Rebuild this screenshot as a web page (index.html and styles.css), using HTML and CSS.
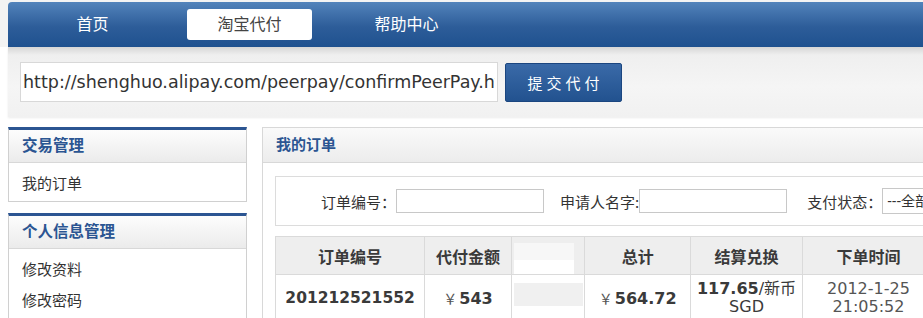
FILE: index.html
```html
<!DOCTYPE html>
<html lang="zh-CN">

<head>
  <meta charset="UTF-8">
  <meta name="viewport" content="width=device-width, initial-scale=1.0">
  <title>淘宝代付</title>
  <link rel="stylesheet" href="styles.css">
</head>

<body>
  <div class="topbar">
    <ul class="nav">
      <li>首页</li>
      <li class="active">淘宝代付</li>
      <li>帮助中心</li>
    </ul>
  </div>

  <div class="urlbar">
    <input class="url" type="text" value="http://shenghuo.alipay.com/peerpay/confirmPeerPay.htm">
    <button class="submit">提交代付</button>
  </div>

  <div class="layout">
    <aside class="sidebar">
      <div class="side-box">
        <h3>交易管理</h3>
        <ul>
          <li>我的订单</li>
        </ul>
      </div>
      <div class="side-box">
        <h3>个人信息管理</h3>
        <ul>
          <li>修改资料</li>
          <li>修改密码</li>
        </ul>
      </div>
    </aside>

    <main class="panel">
      <div class="panel-head">我的订单</div>
      <div class="panel-body">
        <div class="search">
          <label>订单编号：</label>
          <input class="field" type="text">
          <label class="gap-16">申请人名字:</label>
          <input class="field" type="text">
          <label class="gap-20">支付状态：</label>
          <select class="status">
            <option>---全部---</option>
          </select>
        </div>

        <table class="orders">
          <tr class="head">
            <th class="c1">订单编号</th>
            <th class="c2">代付金额</th>
            <th class="c3"><div class="mask-white"></div></th>
            <th class="c4">总计</th>
            <th class="c5">结算兑换</th>
            <th class="c6">下单时间</th>
          </tr>
          <tr class="row">
            <td class="num">201212521552</td>
            <td><span class="yen">￥</span><b>543</b></td>
            <td class="c3"><div class="mask-grey"></div></td>
            <td><span class="yen">￥</span><b>564.72</b></td>
            <td class="rate"><b>117.65</b>/新币<br>SGD</td>
            <td class="time">2012-1-25<br>21:05:52</td>
          </tr>
        </table>
      </div>
    </main>
  </div>
</body>

</html>
```

FILE: styles.css
```css
html {
  overflow: hidden;
}

body {
  margin: 0;
  padding: 2px 0 0 8px;
  width: 1200px;
  font-family: "DejaVu Sans", "Noto Sans CJK SC", sans-serif;
  background: linear-gradient(#f3f3f3 0, #f3f3f3 47px, #fff 47px);
}

.topbar {
  height: 45px;
  background: linear-gradient(#5283bb, #2d5d99 55%, #1f518f);
  border-radius: 4px 0 0 0;
}

.nav {
  display: flex;
  gap: 32px;
  margin: 0;
  padding: 7px 0 0 22px;
  list-style: none;
}

.nav li {
  width: 125px;
  height: 31px;
  line-height: 31px;
  text-align: center;
  color: #fff;
  font-size: 16px;
  border-radius: 3px;
}

.nav .active {
  background: #fff;
  color: #444;
}

.urlbar {
  display: flex;
  gap: 7px;
  height: 55px;
  padding: 15px 0 0 12px;
  background: linear-gradient(#d6d6d6, #efefef 8px, #f5f5f5 40px, #f1f1f1);
  box-shadow: 0 1px 2px rgba(0, 0, 0, 0.08);
}

.url {
  width: 478px;
  height: 40px;
  box-sizing: border-box;
  border: 1px solid #d8d8d8;
  padding: 0 2px;
  font-family: "DejaVu Sans", sans-serif;
  font-size: 17.5px;
  color: #333;
  background: #fff;
  outline: none;
}

.submit {
  width: 117px;
  height: 39px;
  margin-top: 1px;
  background: linear-gradient(#3a6aa8, #22528f);
  border: 1px solid #1b4680;
  border-radius: 2px;
  color: #fff;
  font-family: "Noto Sans CJK SC", sans-serif;
  font-size: 15px;
  letter-spacing: 4px;
  padding: 0 0 0 4px;
}

.layout {
  display: flex;
  align-items: flex-start;
  gap: 15px;
  margin-top: 10px;
}

.sidebar {
  width: 239px;
  flex: 0 0 239px;
}

.side-box {
  box-sizing: border-box;
  border: 1px solid #d0d0d0;
  border-top: 3px solid #2b5592;
  margin-bottom: 11px;
  background: #fff;
}

.side-box h3 {
  margin: 0;
  height: 32px;
  line-height: 32px;
  padding-left: 13px;
  font-size: 15.5px;
  color: #2b5592;
  background: linear-gradient(#fdfdfd, #ebebeb);
  border-bottom: 1px solid #d8d8d8;
}

.side-box ul {
  margin: 0;
  padding: 6px 0 1px 13px;
  list-style: none;
}

.side-box li {
  line-height: 31px;
  font-size: 15px;
  color: #333;
}

.panel {
  flex: 0 0 760px;
  border: 1px solid #d8d8d8;
  background: #fff;
}

.panel-head {
  height: 34px;
  line-height: 34px;
  padding-left: 13px;
  font-size: 15px;
  font-weight: bold;
  color: #2b5592;
  background: linear-gradient(#fafafa, #ececec);
  border-bottom: 1px solid #d8d8d8;
}

.panel-body {
  padding: 13px 0 0 12px;
}

.search {
  display: flex;
  align-items: center;
  height: 48px;
  padding-left: 45px;
  border: 1px solid #dcdcdc;
  font-size: 15px;
  color: #333;
}

.search label {
  font-family: "Noto Sans CJK SC", sans-serif;
  white-space: nowrap;
}

.gap-16 {
  margin-left: 16px;
}

.gap-20 {
  margin-left: 20px;
}

.field {
  width: 148px;
  height: 24px;
  box-sizing: border-box;
  border: 1px solid #c8c8c8;
  padding: 0;
  margin: 0;
}

.status {
  width: 120px;
  height: 26px;
  border: 1px solid #c8c8c8;
  background: #fff;
  font-size: 14px;
  color: #333;
}

.orders {
  margin-top: 10px;
  border-collapse: collapse;
  table-layout: fixed;
  width: 660px;
}

.orders th,
.orders td {
  border: 1px solid #dadada;
  text-align: center;
  padding: 0;
}

.orders .head th {
  height: 37px;
  background: #eeeeee;
  font-size: 16px;
  color: #3a3a3a;
}

.c1 { width: 147px; }
.c2 { width: 85px; }
.c3 { width: 72px; vertical-align: top; }
.c4 { width: 104px; }
.c5 { width: 110px; }
.c6 { width: 130px; }

.orders .head .c3 {
  vertical-align: top;
}

.mask-white {
  width: 60px;
  height: 31px;
  margin: 6px 0 0 2px;
  background: linear-gradient(#f7f7f7 0, #f7f7f7 55%, #fff 55%);
}

.mask-grey {
  width: 69px;
  height: 23px;
  margin: 8px 0 0 2px;
  background: #f0f0f0;
}

.orders .row td {
  height: 46px;
  font-size: 16px;
  line-height: 18px;
  color: #3a3a3a;
}

.orders .row .num {
  font-weight: bold;
  font-size: 15.5px;
}

.yen {
  font-family: "Noto Sans CJK SC", sans-serif;
  font-size: 14px;
  color: #555;
  margin-right: 2px;
}

.rate {
  color: #444;
}

.orders .row .time {
  color: #555;
}
```
